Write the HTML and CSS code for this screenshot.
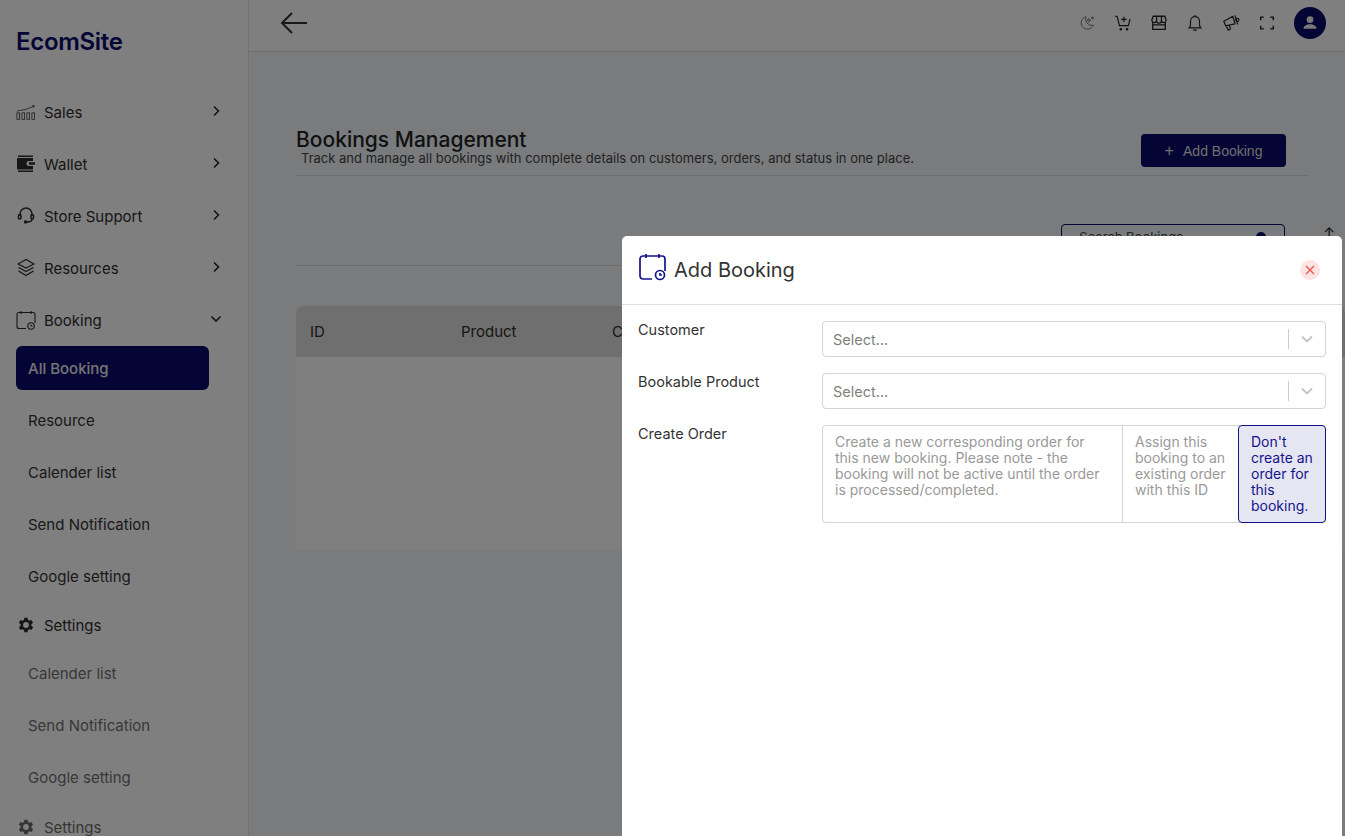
FILE: index.html
```html
<!DOCTYPE html>
<html lang="en">
<head>
  <meta charset="UTF-8">
  <title>Bookings Management</title>
  <link rel="stylesheet" href="styles.css">
</head>
<body>
  <div class="app">
    <!-- sidebar -->
    <aside class="sidebar">
      <div class="brand">EcomSite</div>
      <nav class="menu">
        <a class="menu-item">
          <svg class="menu-icon" viewBox="0 0 22 20" fill="none" stroke="currentColor" stroke-width=".8"><path d="M1 9 Q11 8 20 3.500M17.500 3l2.800.3-1.200 2"/><rect x="1" y="11" width="3" height="7"/><rect x="6.500" y="11" width="3" height="7"/><rect x="12" y="11" width="3" height="7"/><rect x="17.500" y="11" width="3" height="7"/></svg>
          <span>Sales</span>
          <svg class="chevron" viewBox="0 0 12 12"><path d="M4 1.500 8.500 6 4 10.500"/></svg>
        </a>
        <a class="menu-item">
          <svg class="menu-icon" viewBox="0 0 20 20" fill="currentColor"><path d="M2 1.500h15v1.500H2zM1 4h16v3h-4a2.500 2.500 0 0 0 0 5h4v3.500H1zM13 8.300h6v2.500h-6zM2 16.500h15V18H2z"/></svg>
          <span>Wallet</span>
          <svg class="chevron" viewBox="0 0 12 12"><path d="M4 1.500 8.500 6 4 10.500"/></svg>
        </a>
        <a class="menu-item">
          <svg class="menu-icon" viewBox="0 0 20 20" fill="none" stroke="currentColor" stroke-width="1.500"><path d="M4 10V8a6 6 0 0 1 12 0v2"/><rect x="2.500" y="8.500" width="2.500" height="4.500" rx="1.200"/><rect x="15" y="8.500" width="2.500" height="4.500" rx="1.200"/><path d="M16 13c0 2-2 3-5 3"/><circle cx="9.500" cy="16" r="1" fill="currentColor"/></svg>
          <span>Store Support</span>
          <svg class="chevron" viewBox="0 0 12 12"><path d="M4 1.500 8.500 6 4 10.500"/></svg>
        </a>
        <a class="menu-item">
          <svg class="menu-icon" viewBox="0 0 20 20" fill="none" stroke="currentColor" stroke-width="1.300" stroke-linejoin="round"><path d="M10 1.500 18 6l-8 4-8-4zM2.500 9.500 10 13.500l7.500-4M2.500 13 10 17.500l7.500-4.500"/></svg>
          <span>Resources</span>
          <svg class="chevron" viewBox="0 0 12 12"><path d="M4 1.500 8.500 6 4 10.500"/></svg>
        </a>
        <a class="menu-item">
          <svg class="menu-icon" viewBox="0 0 20 20" fill="none" stroke="currentColor" stroke-width="1.100"><path d="M10 18.500H3A2 2 0 0 1 1 16.500V4A2 2 0 0 1 3 2.500h14A2 2 0 0 1 19 4v9M5 1v3M15 1v3"/><circle cx="15" cy="16" r="3.200"/><path d="M15 14.500V16h1.500"/></svg>
          <span>Booking</span>
          <svg class="chevron" viewBox="0 0 12 12"><path d="M1.500 3.500 6 8l4.500-4.500"/></svg>
        </a>
        <a class="sub-item active">All Booking</a>
        <a class="sub-item">Resource</a>
        <a class="sub-item">Calender list</a>
        <a class="sub-item">Send Notification</a>
        <a class="sub-item">Google setting</a>
        <a class="menu-item settings">
          <svg class="menu-icon gear" viewBox="0 0 24 24" fill="currentColor"><path d="M19.400 13a7.600 7.600 0 0 0 0-2l2.100-1.600-2-3.500-2.500 1a7.600 7.600 0 0 0-1.700-1L15 3.300h-4l-.4 2.600a7.600 7.600 0 0 0-1.700 1l-2.500-1-2 3.500L6.500 11a7.600 7.600 0 0 0 0 2l-2.100 1.600 2 3.500 2.500-1a7.600 7.600 0 0 0 1.700 1l.4 2.600h4l.4-2.600a7.600 7.600 0 0 0 1.700-1l2.500 1 2-3.500zM13 15.500a3.500 3.500 0 1 1 0-7 3.500 3.500 0 0 1 0 7z" transform="translate(-1 0)" fill-rule="evenodd"/></svg>
          <span>Settings</span>
        </a>
        <div class="faded">
          <a class="sub-item">Calender list</a>
          <a class="sub-item">Send Notification</a>
          <a class="sub-item">Google setting</a>
          <a class="menu-item settings">
            <svg class="menu-icon gear" viewBox="0 0 24 24" fill="currentColor"><path d="M19.400 13a7.600 7.600 0 0 0 0-2l2.100-1.600-2-3.500-2.500 1a7.600 7.600 0 0 0-1.700-1L15 3.300h-4l-.4 2.600a7.600 7.600 0 0 0-1.700 1l-2.500-1-2 3.500L6.500 11a7.600 7.600 0 0 0 0 2l-2.100 1.600 2 3.500 2.500-1a7.600 7.600 0 0 0 1.700 1l.4 2.600h4l.4-2.600a7.600 7.600 0 0 0 1.700-1l2.500 1 2-3.500zM13 15.500a3.500 3.500 0 1 1 0-7 3.500 3.500 0 0 1 0 7z" transform="translate(-1 0)" fill-rule="evenodd"/></svg>
            <span>Settings</span>
          </a>
        </div>
      </nav>
    </aside>

    <div class="main">
      <!-- top bar -->
      <header class="topbar">
        <svg class="back" viewBox="0 0 28 22" fill="none" stroke="currentColor" stroke-width="2"><path d="M27 11H2M12 1 2 11l10 10"/></svg>
        <div class="top-icons">
          <svg class="top-icon moon" viewBox="0 0 20 20" fill="none" stroke="currentColor" stroke-width="1.100"><path d="M9 3a7 7 0 1 0 8 9.500A7 7 0 0 1 9 3z"/><path d="M12 5l.7 1.500 1.500.5-1.500.6-.7 1.400-.6-1.400L10 7l1.400-.5zM16 3l.4 1 1 .4-1 .4-.4 1-.4-1-1-.4 1-.4z"/></svg>
          <svg class="top-icon" viewBox="0 0 20 20" fill="none" stroke="currentColor" stroke-width="1.300"><path d="M1 2.500h2.500L6 13h10l1.800-7.500M11 3v6M8 6h6"/><circle cx="7.500" cy="17" r=".8" fill="currentColor"/><circle cx="14.500" cy="17" r=".8" fill="currentColor"/></svg>
          <svg class="top-icon" viewBox="0 0 20 20" fill="none" stroke="currentColor" stroke-width="1.400"><path d="M3 9v8h14V9M2 7l1.500-4.500h13L18 7a2.700 2.700 0 0 1-5.300.5 2.700 2.700 0 0 1-5.400 0A2.700 2.700 0 0 1 2 7zM7.300 2.500v5M12.700 2.500v5M3 12h14"/></svg>
          <svg class="top-icon" viewBox="0 0 20 20" fill="none" stroke="currentColor" stroke-width="1.300"><path d="M3.500 15.500c1-1 1.500-2 1.500-4V8a5 5 0 0 1 10 0v3.500c0 2 .5 3 1.500 4zM10 1v2M8 18h4"/></svg>
          <svg class="top-icon" viewBox="0 0 20 20" fill="none" stroke="currentColor" stroke-width="1.300" stroke-linejoin="round"><path d="M2 8l10-5.500 2.500 8.500L4 13zM4.500 13l2.500 5 2.500-1.500-1.800-4.300M14.500 1.500l3 10"/><circle cx="17" cy="6.500" r="1.800"/></svg>
          <svg class="top-icon" viewBox="0 0 20 20" fill="none" stroke="currentColor" stroke-width="1.600"><path d="M3 7V3.500h3.500M13.500 3.500H17V7M17 13v3.500h-3.500M6.500 16.500H3V13"/></svg>
          <div class="avatar"><svg viewBox="0 0 20 20" fill="currentColor"><circle cx="10" cy="6.300" r="3.700"/><path d="M2.800 16.500c0-3.300 3.500-5 7.200-5s7.200 1.700 7.200 5z"/></svg></div>
        </div>
      </header>

      <!-- page -->
      <main class="page">
        <div class="page-head">
          <div class="page-title">
            <h1>Bookings Management</h1>
            <p>Track and manage all bookings with complete details on customers, orders, and status in one place.</p>
          </div>
          <button class="add-btn"><span class="plus">+</span> Add Booking</button>
        </div>
        <div class="toolbar">
          <div class="search">
            <span>Search Bookings</span>
            <svg viewBox="0 0 12 12" fill="currentColor"><circle cx="6" cy="6" r="5"/></svg>
          </div>
          <span class="filter-mark">↑</span>
        </div>
        <div class="table-card">
          <div class="table-head">
            <span class="col-id">ID</span>
            <span class="col-product">Product</span>
            <span>Customer</span>
          </div>
        </div>
      </main>
    </div>
  </div>

  <div class="overlay"></div>

  <!-- add booking drawer -->
  <section class="drawer">
    <div class="drawer-head">
      <svg class="drawer-icon" viewBox="0 0 28 28" fill="none" stroke="currentColor" stroke-width="1.700"><path d="M13 26H4a3 3 0 0 1-3-3V6a3 3 0 0 1 3-3h19a3 3 0 0 1 3 3v12M7 1v4M20 1v4"/><circle cx="21" cy="22" r="4.500"/><path d="M21 20v2h2"/></svg>
      <h2>Add Booking</h2>
      <button class="close-btn"><svg viewBox="0 0 10 10"><path d="M1 1l8 8M9 1 1 9"/></svg></button>
    </div>
    <form class="drawer-body">
      <div class="form-row">
        <label>Customer</label>
        <div class="select">
          <span>Select...</span>
          <i class="select-sep"></i>
          <svg viewBox="0 0 12 8"><path d="M1 1.500 6 6.500l5-5"/></svg>
        </div>
      </div>
      <div class="form-row">
        <label>Bookable Product</label>
        <div class="select">
          <span>Select...</span>
          <i class="select-sep"></i>
          <svg viewBox="0 0 12 8"><path d="M1 1.500 6 6.500l5-5"/></svg>
        </div>
      </div>
      <div class="form-row">
        <label>Create Order</label>
        <div class="choice-group">
          <div class="choice choice-new">Create a new corresponding order for this new booking. Please note - the booking will not be active until the order is processed/completed.</div>
          <div class="choice choice-assign">Assign this booking to an existing order with this ID</div>
          <div class="choice choice-none selected">Don't create an order for this booking.</div>
        </div>
      </div>
    </form>
  </section>
</body>
</html>
```

FILE: styles.css
```css
/* layout */
* { box-sizing: border-box; }
html, body { height: 100%; }
body {
  margin: 0;
  overflow: hidden;
  font-family: "Inter", "Open Sans", sans-serif;
  color: #222;
}
.app { display: flex; height: 836px; overflow: hidden; }

/* sidebar */
.sidebar {
  width: 249px;
  flex: none;
  background: #fff;
  border-right: 1px solid #e4e4e4;
  padding: 0 16px;
  overflow: hidden;
}
.brand {
  margin-top: 27px;
  height: 30px;
  line-height: 30px;
  font-size: 24px;
  font-weight: 600;
  letter-spacing: -.3px;
  color: #0a0a6b;
}
.menu { margin-top: 29px; }
.menu-item {
  display: flex;
  align-items: center;
  height: 52px;
  font-size: 15px;
  color: #2d2d2d;
}
.menu-icon { width: 20px; height: 20px; margin-right: 8px; flex: none; }
.chevron {
  width: 12px;
  height: 12px;
  margin-left: auto;
  margin-right: 10px;
  margin-top: -2px;
  fill: none;
  stroke: #2d2d2d;
  stroke-width: 1.700;
}
.sub-item {
  display: flex;
  align-items: center;
  height: 44px;
  margin-bottom: 8px;
  padding-left: 12px;
  width: 193px;
  border-radius: 6px;
  font-size: 15px;
  color: #333;
}
.sub-item.active { background: #0a0a6b; color: #e8e8e8; font-weight: 500; }
.settings { height: 42px; margin-top: -2px; }
.faded { margin-top: 5px; opacity: .7; }
.faded .settings { margin-top: 2px; height: 40px; }

/* main */
.main { flex: 1; min-width: 0; background: #f3f6fa; }
.topbar {
  height: 52px;
  display: flex;
  align-items: center;
  padding: 0 19px 6px 31px;
  background: #fff;
  border-bottom: 1px solid #d8d8d8;
}
.back { width: 28px; height: 22px; color: #333; }
.top-icons { margin-left: auto; display: flex; align-items: center; gap: 18px; color: #222; }
.top-icon { width: 18px; height: 18px; }
.moon { color: #777; }
.avatar {
  width: 32px;
  height: 32px;
  border-radius: 50%;
  background: #0a0a6b;
  color: #f2f2f2;
  display: flex;
  align-items: center;
  justify-content: center;
}
.avatar svg { width: 18px; height: 18px; }

.page { padding: 76px 36px 0 47px; }
.page-head {
  display: flex;
  justify-content: space-between;
  align-items: flex-start;
  height: 48px;
  border-bottom: 1px solid #ddd;
  padding-right: 23px;
}
.page-title h1 {
  margin: 0;
  font-size: 21px;
  line-height: 24px;
  font-weight: 500;
  color: #222;
}
.page-title p {
  margin: -2px 0 0 5px;
  font-size: 13px;
  line-height: 16px;
  color: #444;
}
.add-btn {
  width: 145px;
  height: 33px;
  margin-top: 6px;
  border: 0;
  border-radius: 4px;
  background: #0a0a6b;
  color: #ddd;
  font-family: "Liberation Sans", Arial, sans-serif;
  font-size: 14px;
}
.plus { margin-right: 6px; font-size: 16px; }
.toolbar {
  display: flex;
  align-items: flex-start;
  justify-content: flex-end;
  height: 90px;
  padding-top: 48px;
  border-bottom: 1px solid #ddd;
  margin-bottom: 40px;
}
.search {
  width: 224px;
  height: 40px;
  margin-right: 38px;
  padding: 0 17px;
  display: flex;
  align-items: flex-start;
  justify-content: space-between;
  line-height: 24px;
  border: 1px solid #0a0a6b;
  border-radius: 4px;
  font-size: 13px;
  color: #444;
}
.search svg { width: 12px; height: 12px; margin-top: 6px; color: #0a0a6b; }
.filter-mark { position: relative; font-size: 14px; margin-right: -26px; }
.table-card {
  height: 243px;
  margin-right: -36px;
  background: #fff;
  border-radius: 8px 8px 0 0;
  overflow: hidden;
}
.table-head {
  display: flex;
  align-items: center;
  height: 51px;
  padding-left: 14px;
  background: #dedede;
  font-size: 15px;
  color: #2d2d2d;
}
.col-id { width: 151px; }
.col-product { width: 151px; }

/* dim layer + drawer */
.overlay { position: fixed; inset: 0; background: rgba(0, 0, 0, .5); }
.drawer {
  position: fixed;
  top: 236px;
  left: 622px;
  right: 3px;
  bottom: 0;
  background: #fff;
  border-radius: 5px 5px 0 0;
}
.drawer-head {
  display: flex;
  align-items: center;
  height: 69px;
  padding: 0 22px 0 17px;
  border-bottom: 1px solid #dedede;
}
.drawer-icon { width: 28px; height: 28px; margin: -6px 7px 0 0; color: #14148a; }
.drawer-head h2 { margin: 0; font-size: 20px; font-weight: 400; color: #333; }
.close-btn {
  margin-left: auto;
  width: 20px;
  height: 20px;
  padding: 5px;
  border: 0;
  border-radius: 50%;
  background: #fde3e1;
  display: flex;
}
.close-btn svg { fill: none; stroke: #e85a50; stroke-width: 1.300; }
.drawer-body { padding: 16px 16px 0; }
.form-row { display: flex; margin-bottom: 16px; }
.form-row label { width: 184px; flex: none; font-size: 14.500px; line-height: 18px; color: #333; }
.select {
  flex: 1;
  height: 36px;
  display: flex;
  align-items: center;
  padding: 0 12px 0 10px;
  border: 1px solid #d4d4d4;
  border-radius: 4px;
  font-size: 14.500px;
  color: #808080;
}
.select-sep { width: 1px; height: 20px; margin-left: auto; margin-right: 12px; background: #ccc; }
.select svg { width: 12px; height: 8px; fill: none; stroke: #c4c4c4; stroke-width: 1.800; }
.choice-group {
  flex: 1;
  display: flex;
  height: 98px;
  border: 1px solid #d4d4d4;
  border-radius: 4px;
  font-size: 14px;
  line-height: 16px;
  color: #999;
}
.choice { padding: 8px 12px; }
.choice-new { width: 300px; border-right: 1px solid #d4d4d4; }
.choice-assign { width: 116px; }
.choice-none { flex: 1; }
.choice.selected {
  margin: -1px;
  background: #e6e6f2;
  border: 1px solid #14148a;
  border-radius: 4px;
  color: #14148a;
}
```
